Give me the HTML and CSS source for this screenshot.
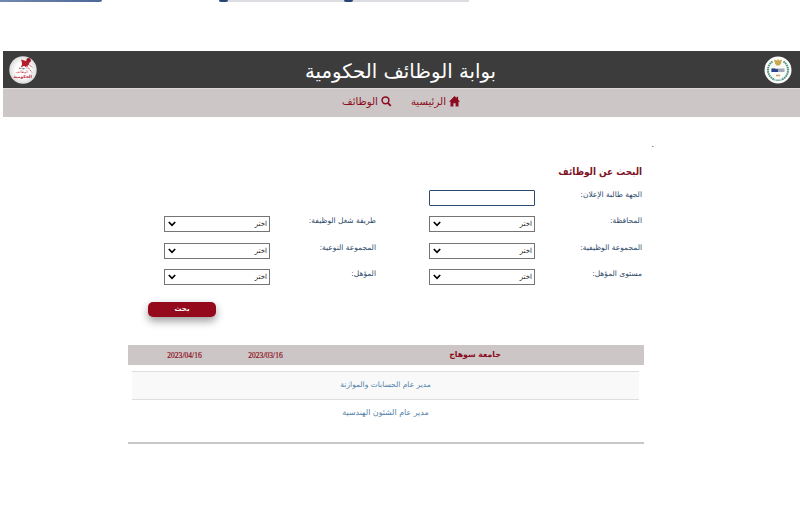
FILE: index.html
```
<!DOCTYPE html>
<html lang="ar" dir="rtl">
<head>
  <meta charset="UTF-8" />
  <meta name="viewport" content="width=device-width, initial-scale=1.0" />
  <title>بوابة الوظائف الحكومية</title>
  <link rel="stylesheet" href="styles.css">
</head>
<body>
  <div class="top-strip" dir="ltr">
    <div class="strip-blue"></div>
    <div class="strip-gap"></div>
    <div class="strip-gray"><i class="knob first"></i><i class="knob second"></i></div>
  </div>

  <header class="header">
    <svg class="logo" viewBox="0 0 28 28">
      <circle cx="14" cy="14" r="13.500" fill="#fbfbf8"/>
      <path d="M8.500 5.500A10.300 10.300 0 0 0 11 23.800M19.500 5.500A10.300 10.300 0 0 1 17 23.800" fill="none" stroke="#4f9384" stroke-width="2" stroke-dasharray="1.600 .6"/>
      <path d="M11.500 24.200h5" stroke="#6aa294" stroke-width="1.200"/>
      <path d="M10 3.500l3 1 1-1.500 1 1.500 3-1-1 4-1.500 2h-3l-1.500-2z" fill="#c9a84e"/>
      <path d="M7.500 12.500h13v3.500h-13z" fill="#a3a9b8"/>
      <path d="M7.500 12.500h3.500l1 .8 2-.3v3H7.500z" fill="#28448c"/>
      <path d="M12 19.500h4" stroke="#c0a66a" stroke-width="1.500"/>
    </svg>
    <h1><span>بوابة الوظائف الحكومية</span></h1>
    <svg class="logo" viewBox="0 0 28 28">
      <defs>
        <radialGradient id="ball"><stop offset=".55" stop-color="#fff"/><stop offset="1" stop-color="#dcdcdc"/></radialGradient>
      </defs>
      <circle cx="14" cy="14" r="13.700" fill="url(#ball)"/>
      <circle cx="19.600" cy="4.400" r="2.300" fill="#9a1428"/>
      <path d="M12.200 3.500l4.800 1.500 3.500 0-.5 3.500-2.200 2-3-.5-3 1.200 1.300-3z" fill="#b71c2c"/>
      <path d="M17.500 9.500l5.500 7M19 8l4.500 3.500M16 10l2 2.500" stroke="#c03440" stroke-width=".8" stroke-dasharray="2 .6"/>
      <text x="13" y="13" class="logo-text dark">بوابة</text>
      <text x="13" y="17.300" class="logo-text">الوظائف</text>
      <text x="13.700" y="21.800" class="logo-text big">الحكومية</text>
    </svg>
  </header>

  <nav class="nav">
    <a class="nav-link home">
      <svg width="11" height="11" viewBox="0 0 11 11"><path d="M5.500 0L7.600 2V.8h1.500v2.700L11 5.700H9.500V10.500H6.600V7.300H4.400v3.200H1.500V5.700H0z"/></svg>
      <span>الرئيسية</span>
    </a>
    <a class="nav-link jobs">
      <svg width="11" height="11" viewBox="0 0 11 11"><circle cx="4.500" cy="4.300" r="3.400" fill="none" stroke="#8c0b20" stroke-width="1.500"/><path d="M6.800 6.800l3 3" stroke="#8c0b20" stroke-width="1.900"/></svg>
      <span>الوظائف</span>
    </a>
  </nav>

  <main class="content">
    <div class="dot">.</div>
    <h2><span>البحث عن الوظائف</span></h2>
    <form class="search-form">
      <label><span>الجهة طالبة الإعلان:</span></label>
      <div class="field text-field"></div>
      <div></div>
      <div></div>

      <label><span>المحافظة:</span></label>
      <div class="field"><span>اختر</span><svg width="8" height="6" viewBox="0 0 8 6"><path d="M.8 1L4 4.300 7.200 1"/></svg></div>
      <label><span>طريقة شغل الوظيفة:</span></label>
      <div class="field"><span>اختر</span><svg width="8" height="6" viewBox="0 0 8 6"><path d="M.8 1L4 4.300 7.200 1"/></svg></div>

      <label><span>المجموعة الوظيفية:</span></label>
      <div class="field"><span>اختر</span><svg width="8" height="6" viewBox="0 0 8 6"><path d="M.8 1L4 4.300 7.200 1"/></svg></div>
      <label><span>المجموعة النوعية:</span></label>
      <div class="field"><span>اختر</span><svg width="8" height="6" viewBox="0 0 8 6"><path d="M.8 1L4 4.300 7.200 1"/></svg></div>

      <label><span>مستوى المؤهل:</span></label>
      <div class="field"><span>اختر</span><svg width="8" height="6" viewBox="0 0 8 6"><path d="M.8 1L4 4.300 7.200 1"/></svg></div>
      <label><span>المؤهل:</span></label>
      <div class="field"><span>اختر</span><svg width="8" height="6" viewBox="0 0 8 6"><path d="M.8 1L4 4.300 7.200 1"/></svg></div>
    </form>
    <div class="actions"><button type="button" class="search-btn">بحث</button></div>

    <section class="results">
      <div class="results-head">
        <span class="entity">جامعة سوهاج</span>
        <span class="date">2023/03/16</span>
        <span class="date">2023/04/16</span>
      </div>
      <div class="job-list">
        <div class="job striped"><a>مدير عام الحسابات والموازنة</a></div>
        <div class="job"><a>مدير عام الشئون الهندسية</a></div>
      </div>
    </section>
  </main>
</body>
</html>
```

FILE: styles.css
```
* {
  box-sizing: border-box;
}
body {
  margin: 0;
  height: 507px;
  overflow: hidden;
  background: #fff;
  font-family: "DejaVu Sans", sans-serif;
}
h1, h2 {
  margin: 0;
}
.top-strip {
  display: flex;
  height: 51px;
  align-items: flex-start;
}
.strip-blue {
  width: 102px;
  height: 2px;
  background: linear-gradient(90deg, #7288b0, #4e6798);
  border-radius: 0 0 4px 0;
}
.strip-gap {
  width: 117px;
}
.strip-gray {
  position: relative;
  width: 250px;
  height: 2px;
  background: #dcdde1;
}
.knob {
  position: absolute;
  top: 0;
  width: 9px;
  height: 2px;
  background: #284579;
  border-radius: 0 0 5px 5px;
}
.knob.first {
  left: 0;
}
.knob.second {
  left: 125px;
}
.header {
  display: flex;
  justify-content: space-between;
  align-items: center;
  height: 37px;
  margin-left: 3px;
  padding: 0 8px 0 6px;
  background: #3c3c3c;
}
.logo {
  width: 28px;
  height: 28px;
}
.logo-text {
  font-size: 3.500px;
  text-anchor: middle;
  fill: #c22a3a;
}
.logo-text.dark {
  fill: #333;
}
.logo-text.big {
  font-size: 4.300px;
  font-weight: bold;
}
.header h1 {
  padding-top: 4px;
  color: #fff;
  font-size: 19.700px;
  font-weight: normal;
  line-height: 30px;
  white-space: nowrap;
}
.nav {
  display: flex;
  height: 29px;
  margin-left: 3px;
  padding: 6px 340px 0 0;
  gap: 19px;
  background: #cdc6c6;
  border-top: 1px solid #dedada;
}
.nav-link {
  display: flex;
  gap: 3px;
  height: 12px;
  align-items: center;
  color: #8c0b20;
  font-size: 10.200px;
  white-space: nowrap;
}
.nav-link svg {
  fill: #8c0b20;
}
.content {
  width: 516px;
  margin-left: 128px;
  margin-right: 156px;
}
.dot {
  height: 47px;
  margin-right: -10px;
  padding-top: 23px;
  color: #333;
  font-size: 8px;
}
h2 {
  height: 25px;
  padding-right: 2px;
  color: #7c1424;
  font-size: 10px;
  line-height: 16px;
}
h2 span {
  display: inline-block;
  transform: scaleX(.89);
  transform-origin: right;
}
.search-form {
  display: grid;
  grid-template-columns: 107px 106px 159px 106px;
  grid-auto-rows: 16px;
  row-gap: 10.400px;
  padding: 1px 2px 0 0;
}
.search-form label {
  color: #2c4a6a;
  font-size: 7.500px;
  line-height: 10px;
  white-space: nowrap;
}
.search-form label:nth-child(4n + 3) {
  padding-right: 53px;
}
.field {
  display: flex;
  justify-content: space-between;
  align-items: center;
  height: 16px;
  padding: 0 2px 0 3px;
  border: 1px solid #757575;
  color: #222;
  font-size: 7px;
}
.text-field {
  border-color: #2d4a70;
  border-radius: 1px;
}
.field svg {
  fill: none;
  stroke: #000;
  stroke-width: 1.700;
}
.actions {
  display: flex;
  justify-content: flex-end;
  height: 43px;
  padding: 0 0 0 20px;
  margin-top: 16.700px;
}
.search-btn {
  width: 68px;
  height: 15px;
  padding: 0;
  border: 0;
  border-radius: 5px;
  background: #940a1c;
  box-shadow: 0 4px 8px rgba(0, 0, 0, .4);
  color: #fff;
  font-family: "DejaVu Sans", sans-serif;
  font-size: 7px;
  font-weight: bold;
}
.results {
  height: 99px;
  border-bottom: 2px solid #c8c6c6;
}
.results-head {
  display: grid;
  grid-template-columns: 338px 81px 81px;
  height: 20px;
  align-items: center;
  background: #cdc6c6;
  color: #8c0b20;
  font-size: 7.800px;
  text-align: center;
}
.entity {
  font-weight: bold;
}
.date {
  font-family: "Liberation Serif", serif;
  font-size: 9px;
  -webkit-text-stroke: .2px #8c0b20;
  transform: scaleX(.84);
}
.job-list {
  margin: 6px 5px 0 4px;
}
.job {
  height: 28px;
  border-top: 1px solid #dedede;
  color: #527fa8;
  font-size: 7.500px;
  line-height: 26px;
  text-align: center;
}
.job + .job {
  font-size: 7.900px;
}
.striped {
  background: #f9f9f9;
}
```
